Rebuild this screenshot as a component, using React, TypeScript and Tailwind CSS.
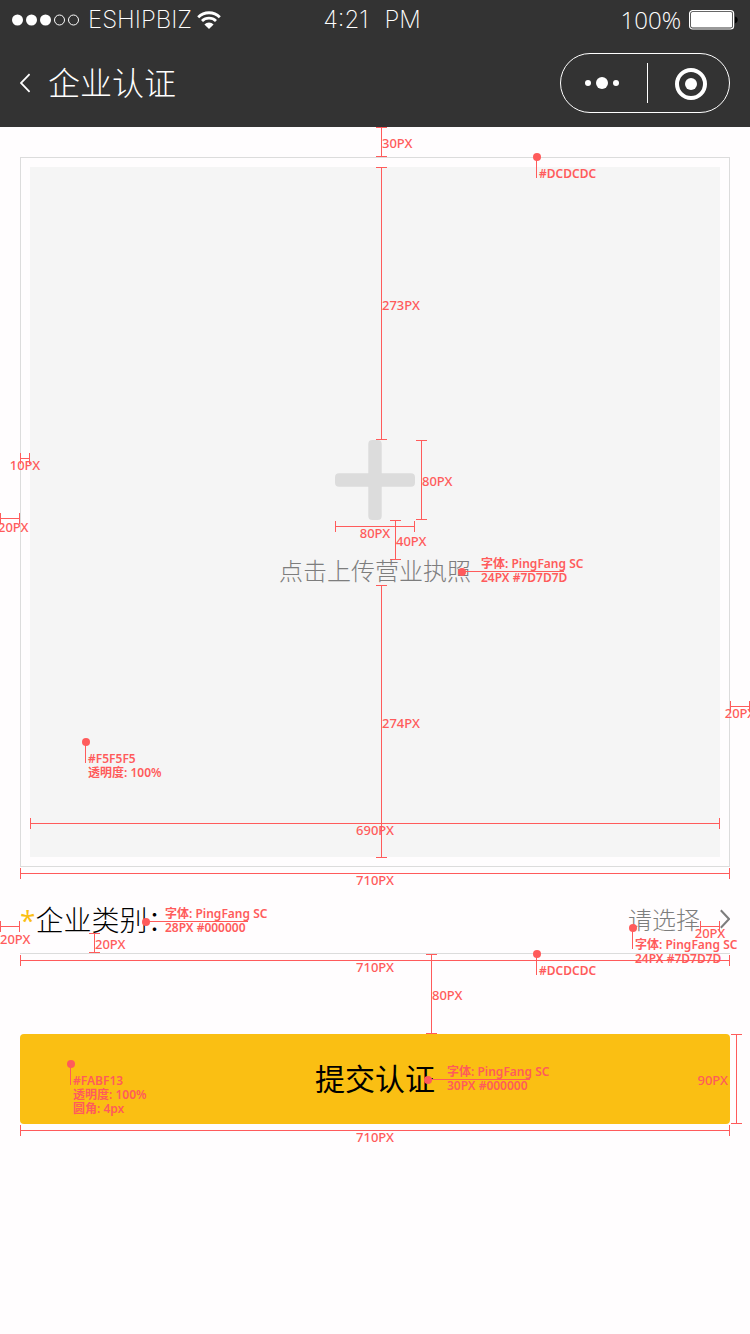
import React from "react";

type Place = { className: string };

const noteText =
  "absolute whitespace-nowrap text-left leading-[14px] text-[#ff5b5b] font-['Noto_Sans','Noto_Sans_CJK_SC',sans-serif]";

/* Vertical dimension line with end caps and a value beside it. */
function VMeasure({ className, value, side = "right" }: Place & { value: string; side?: "left" | "right" }) {
  return (
    <span className={`pointer-events-none absolute flex w-[11px] flex-col items-center ${className}`}>
      <span className="h-px w-full bg-[#ff5b5b]" />
      <span className="w-px grow bg-[#ff5b5b]" />
      <span className="h-px w-full bg-[#ff5b5b]" />
      <span className={`${noteText} top-[calc(50%-6px)] text-[13px] font-medium ${side === "right" ? "left-[6px]" : "right-[14px]"}`}>
        {value}
      </span>
    </span>
  );
}

/* Horizontal dimension line with end caps and a value below it. */
function HMeasure({ className, value, labelClass = "top-[5px] left-1/2 -translate-x-1/2" }: Place & { value: string; labelClass?: string }) {
  return (
    <span className={`pointer-events-none absolute flex h-[11px] items-center ${className}`}>
      <span className="h-full w-px bg-[#ff5b5b]" />
      <span className="h-px grow bg-[#ff5b5b]" />
      <span className="h-full w-px bg-[#ff5b5b]" />
      <span className={`${noteText} text-[13px] font-medium ${labelClass}`}>{value}</span>
    </span>
  );
}

/* Dot with a leader line, pointing at a style note. */
function Pin({ className, lines, dir = "down" }: Place & { lines: string[]; dir?: "down" | "right" }) {
  const down = dir === "down";
  return (
    <span className={`pointer-events-none absolute size-0 ${className}`}>
      <span className="absolute -top-1 -left-1 size-2 rounded-full bg-[#ff5b5b]" />
      <span className={`absolute bg-[#ff5b5b] ${down ? "-left-px top-0 h-[21px] w-px" : "-top-px left-0 h-px w-[102px]"}`} />
      <span className={`${noteText} text-[12px] font-semibold ${down ? "left-[2px] top-[10px]" : "left-[19px] -top-[15px]"}`}>
        {lines.map((line) => (
          <span key={line} className="block">
            {line}
          </span>
        ))}
      </span>
    </span>
  );
}

function StatusBar() {
  return (
    <div className="grid h-10 grid-cols-3 items-center px-3 text-2xl leading-none font-extralight font-['Inter',sans-serif]">
      <div className="flex items-center gap-2">
        <svg width="68" height="12" viewBox="0 0 68 12" aria-hidden="true">
          <g fill="#fff">
            <circle cx="5.5" cy="6" r="5.5" />
            <circle cx="19.5" cy="6" r="5.5" />
            <circle cx="33.5" cy="6" r="5.5" />
          </g>
          <g fill="none" stroke="#fff">
            <circle cx="47.5" cy="6" r="5" />
            <circle cx="61.5" cy="6" r="5" />
          </g>
        </svg>
        <div className="flex items-center gap-[5px]">
          <span>ESHIPBIZ</span>
          <svg width="24" height="18" viewBox="0 0 24 18" aria-hidden="true">
            <g fill="none" stroke="#fff" strokeWidth="2.8">
              <path d="M1.2 6.2A15.3 15.3 0 0 1 22.8 6.2" />
              <path d="M5 10A10 10 0 0 1 19 10" />
            </g>
            <path d="M12 18 7.4 13.4a6.5 6.5 0 0 1 9.2 0Z" fill="#fff" />
          </svg>
        </div>
      </div>
      <div className="flex justify-center gap-4 pr-1.5">
        <span>4:21</span>
        <span>PM</span>
      </div>
      <div className="flex items-center justify-end gap-2">
        <span className="pb-px leading-none font-light font-['Open_Sans',sans-serif]">100%</span>
        <svg width="49" height="20" viewBox="0 0 49 20" aria-hidden="true">
          <rect x="0.6" y="0.6" width="44" height="18.4" rx="3" fill="none" stroke="#fff" strokeWidth="1.2" />
          <rect x="2" y="2" width="41.2" height="15.6" rx="1.5" fill="#fff" />
          <path d="M46 6.4c3.6.6 3.6 6.2 0 6.8Z" fill="#000" />
        </svg>
      </div>
    </div>
  );
}

function NavBar() {
  return (
    <div className="flex h-[87px] items-center justify-between px-5 pb-px">
      <div className="flex items-center gap-[18px]">
        <button type="button" aria-label="返回">
          <svg width="10" height="20" viewBox="0 0 10 20" fill="none" stroke="#fff" strokeWidth="1.8" aria-hidden="true">
            <path d="M9.6 1.2.9 10l8.700 8.8" />
          </svg>
        </button>
        <h1 className="pb-1 text-[32px] leading-10 font-light">企业认证</h1>
      </div>
      <div className="flex h-[60px] w-[170px] items-center rounded-full border border-white">
        <button type="button" aria-label="更多" className="flex h-full w-[86px] items-center justify-center pr-1">
          <svg width="34" height="12" viewBox="0 0 34 12" fill="#fff" aria-hidden="true">
            <circle cx="3" cy="6" r="3" />
            <circle cx="17" cy="6" r="6" />
            <circle cx="31" cy="6" r="3" />
          </svg>
        </button>
        <span className="h-10 w-px bg-white" />
        <button type="button" aria-label="关闭" className="flex h-full flex-1 items-center justify-center pt-px pl-1">
          <svg width="32" height="32" viewBox="0 0 32 32" aria-hidden="true">
            <circle cx="16" cy="16" r="14" fill="none" stroke="#fff" strokeWidth="4" />
            <circle cx="16" cy="16" r="6" fill="#fff" />
          </svg>
        </button>
      </div>
    </div>
  );
}

function LicenseUpload() {
  return (
    <div className="relative">
      <label className="flex aspect-square w-full cursor-pointer border border-[#dcdcdc] p-[9px]">
        <input type="file" accept="image/*" className="sr-only" />
        <span className="flex grow flex-col items-center justify-center gap-10 bg-[#f5f5f5]">
          <span className="relative">
            <svg width="80" height="80" viewBox="0 0 80 80" fill="#dcdcdc" aria-hidden="true">
              <rect x="33.300" width="13.400" height="80" rx="4" />
              <rect y="33.300" width="80" height="13.400" rx="4" />
            </svg>
            <VMeasure className="top-0 left-[81px] h-20" value="80PX" />
            <HMeasure className="top-[81px] left-0 w-20" value="80PX" />
            <VMeasure className="top-20 left-[55px] h-10" value="40PX" />
          </span>
          <span className="relative pb-1 text-2xl leading-5 font-light text-[#7d7d7d]">
            点击上传营业执照
            <Pin className="top-3 left-[183px]" dir="right" lines={["字体: PingFang SC", "24PX #7D7D7D"]} />
          </span>
        </span>
      </label>
      <VMeasure className="-top-[30px] left-[calc(50%+1px)] h-[30px]" value="30PX" />
      <VMeasure className="top-[10px] left-[calc(50%+1px)] h-[273px]" value="273PX" />
      <VMeasure className="bottom-[9px] left-[calc(50%+1px)] h-[273px]" value="274PX" />
      <HMeasure className="top-[296px] left-0 w-[10px]" value="10PX" />
      <HMeasure className="top-[356px] -left-5 w-5" value="20PX" labelClass="top-[7px] -left-[2px]" />
      <HMeasure className="top-[544px] left-full w-5" value="20PX" />
      <HMeasure className="right-[10px] bottom-[38px] left-[10px]" value="690PX" />
      <HMeasure className="top-[calc(100%+1px)] right-0 left-0" value="710PX" />
      <Pin className="top-0 left-[517px]" lines={["#DCDCDC"]} />
      <Pin className="top-[585px] left-[66px]" lines={["#F5F5F5", "透明度: 100%"]} />
    </div>
  );
}

function CategoryField() {
  return (
    <div className="relative">
      <div className="flex items-center justify-between border-b border-[#dcdcdc] pt-[34px] pb-4">
        <label htmlFor="category" className="text-[28px] leading-9 font-light text-black">
          <span className="leading-none font-normal text-[#fabf13] font-['Open_Sans',sans-serif]">*</span>企业类别：
        </label>
        <div className="flex items-center gap-5">
          <select id="category" className="appearance-none bg-transparent text-2xl leading-9 font-light text-[#7d7d7d]">
            <option>请选择</option>
          </select>
          <svg width="10" height="20" viewBox="0 0 10 20" fill="none" stroke="#7d7d7d" strokeWidth="2" aria-hidden="true">
            <path d="M.8 1.200 9 10 .8 18.800" />
          </svg>
        </div>
      </div>
      <HMeasure className="top-[54px] -left-5 w-5" value="20PX" labelClass="top-[11px] left-0" />
      <VMeasure className="top-[66px] left-[69px] h-5" value="20PX" />
      <HMeasure className="top-[54px] right-[10px] w-5" value="20PX" />
      <HMeasure className="top-[88px] right-0 left-0" value="710PX" />
      <VMeasure className="top-[87px] left-[calc(50%+51px)] h-20" value="80PX" />
      <Pin className="top-[55px] left-[126px]" dir="right" lines={["字体: PingFang SC", "28PX #000000"]} />
      <Pin className="top-[61px] right-[97px]" lines={["字体: PingFang SC", "24PX #7D7D7D"]} />
      <Pin className="top-[87px] left-[517px]" lines={["#DCDCDC"]} />
    </div>
  );
}

function SubmitArea() {
  return (
    <div className="relative mt-20">
      <button type="submit" className="block h-[90px] w-full rounded bg-[#fabf13] pb-1 text-[30px] leading-10 text-black">
        提交认证
      </button>
      <Pin className="top-[30px] left-[51px]" lines={["#FABF13", "透明度: 100%", "圆角: 4px"]} />
      <Pin className="top-[46px] left-[calc(50%+53px)]" dir="right" lines={["字体: PingFang SC", "30PX #000000"]} />
      <VMeasure className="top-0 left-[calc(100%+1px)] h-[90px]" value="90PX" side="left" />
      <HMeasure className="top-[calc(100%+1px)] right-0 left-0" value="710PX" />
    </div>
  );
}

export default function App() {
  return (
    <div className="min-h-screen overflow-x-hidden bg-[#fffdfe] font-['Noto_Sans_CJK_SC',sans-serif]">
      <header className="bg-[#333333] text-white">
        <StatusBar />
        <NavBar />
      </header>
      <main className="px-5 pt-[30px]">
        <form onSubmit={(event: React.FormEvent) => event.preventDefault()}>
          <LicenseUpload />
          <CategoryField />
          <SubmitArea />
        </form>
      </main>
    </div>
  );
}
